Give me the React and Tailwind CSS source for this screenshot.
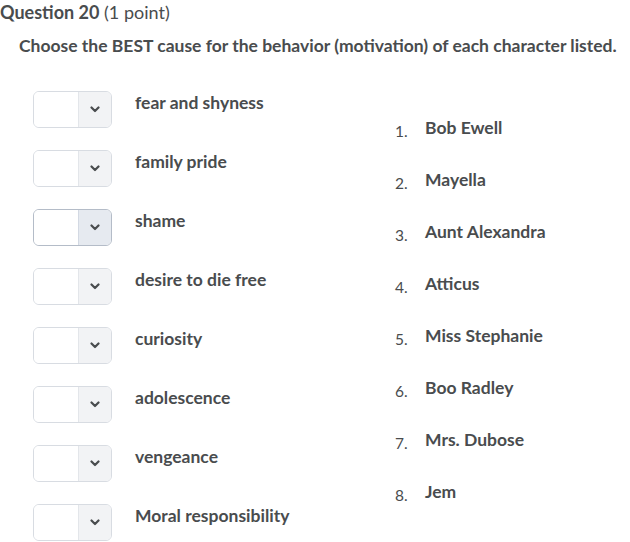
import React from 'react';

const causes = [
  'fear and shyness',
  'family pride',
  'shame',
  'desire to die free',
  'curiosity',
  'adolescence',
  'vengeance',
  'Moral responsibility',
];

const characters = [
  'Bob Ewell',
  'Mayella',
  'Aunt Alexandra',
  'Atticus',
  'Miss Stephanie',
  'Boo Radley',
  'Mrs. Dubose',
  'Jem',
];

function Chevron() {
  return (
    <svg width="10" height="7" viewBox="0 0 10 7" fill="none">
      <path d="M1.5 1.5 L5 5 L8.5 1.5" stroke="#494c4e" strokeWidth="2.2" strokeLinecap="round" strokeLinejoin="round" />
    </svg>
  );
}

function SelectBox({ focused }) {
  return (
    <div
      className={
        'flex h-[37px] w-[79px] shrink-0 overflow-hidden rounded-[6px] border ' +
        (focused ? 'border-[#b4bcc8]' : 'border-[#d8dce2]')
      }
    >
      <div className="w-[44px] bg-white" />
      <div
        className={
          'flex flex-1 items-center justify-center border-l ' +
          (focused ? 'border-[#d3d9e3] bg-[#e6eaf0]' : 'border-[#e3e6ea] bg-[#f2f3f5]')
        }
      >
        <Chevron />
      </div>
    </div>
  );
}

export default function App() {
  return (
    <div className="h-[542px] w-[630px] bg-white text-[#494c4e]" style={{ fontFamily: 'Lato, "Open Sans", sans-serif' }}>
      <div className="pt-[1px] text-[18px] leading-[22px]">
        <span className="font-bold">Question 20</span> <span>(1 point)</span>
      </div>
      <div className="mt-[12px] pl-[19px] text-[17.5px] font-bold leading-[22px]">
        Choose the BEST cause for the behavior (motivation) of each character listed.
      </div>

      <div className="mt-[34px] flex">
        <div className="flex w-[395px] shrink-0 flex-col gap-[22px] pl-[33px]">
          {causes.map((c, i) => (
            <div key={c} className="flex">
              <SelectBox focused={i === 2} />
              <div className="ml-[23px] pt-[1px] text-[17.5px] font-bold leading-[22px]">{c}</div>
            </div>
          ))}
        </div>

        <div className="flex flex-col gap-[30px] pt-[26px]">
          {characters.map((n, i) => (
            <div key={n} className="flex items-baseline">
              <span className="w-[30px] translate-y-[3px] text-[15.5px] leading-[22px]">{i + 1}.</span>
              <span className="text-[17.5px] font-bold leading-[22px]">{n}</span>
            </div>
          ))}
        </div>
      </div>
    </div>
  );
}
